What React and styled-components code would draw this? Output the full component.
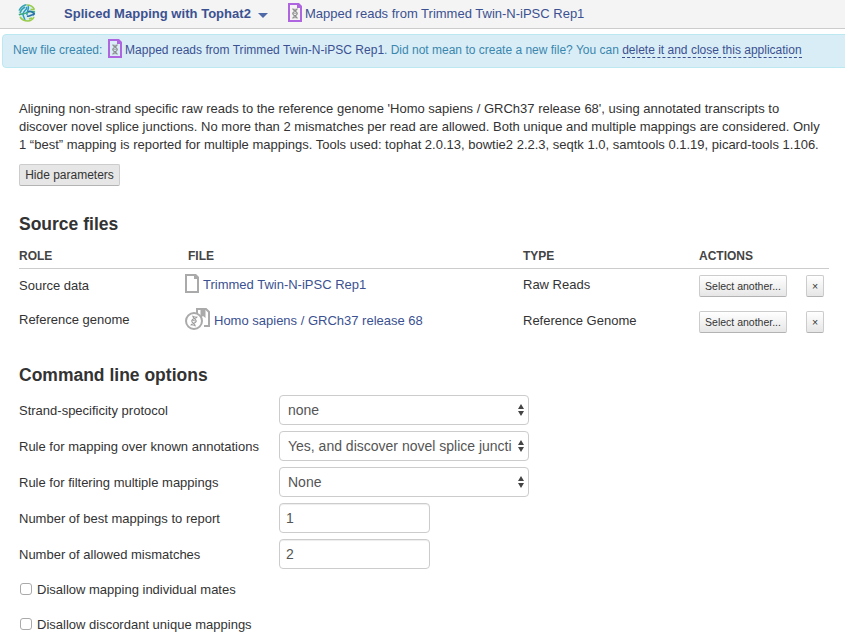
import React from 'react';
import styled, { createGlobalStyle } from 'styled-components';

const GlobalStyle = createGlobalStyle`
  *, *::before, *::after { box-sizing: border-box; }
  body {
    margin: 0;
    background: #fff;
    color: #333;
    font: 13px/18px "Liberation Sans", Helvetica, Arial, sans-serif;
    overflow: hidden;
  }
  button, input, select { font-family: inherit; }
`;

const Page = styled.div`
  width: 845px;
  height: 644px;
  overflow: hidden;
`;

const Header = styled.header`
  display: flex;
  align-items: flex-start;
  height: 29px;
  padding: 3px 18px 0;
  background: #f4f4f4;
  border-bottom: 1px solid #ccc;
  color: #3b5191;
  white-space: nowrap;
`;

const LogoIcon = styled.svg`
  flex: none;
  width: 18px;
  height: 18px;
  margin: 1px 28px 0 0;
`;

const AppName = styled.strong`
  width: 188px;
  margin-top: 2px;
  letter-spacing: 0.03px;
`;

const Caret = styled.span`
  margin: 10px 20px 0 6px;
  border: 5px solid transparent;
  border-top-color: #4f68a8;
  border-bottom: 0;
`;

const FileName = styled.span`
  margin-top: 2px;
`;

const PageIcon = styled.svg`
  flex: none;
  width: 14px;
  height: 19px;
  margin-right: ${(p) => p.$gap || 3}px;
`;

const GenomeIconSvg = styled.svg`
  flex: none;
  width: 25px;
  height: 22px;
  margin-right: 4px;
`;

const Notice = styled.div`
  display: flex;
  align-items: flex-start;
  width: 850px;
  height: 34px;
  margin: 5px 0 0 2px;
  padding: 4px 11px 0 10px;
  background: #d9edf7;
  border: 1px solid #bce8f1;
  border-radius: 4px;
  color: #3a87ad;
  font-size: 12px;
  white-space: pre;
`;

const NoticeText = styled.span`
  margin-top: 2px;
`;

const NoticeLead = styled(NoticeText)`
  width: 95px;
`;

const NoticeName = styled(NoticeText)`
  width: 259px;
  color: #3b5191;
  letter-spacing: 0.03px;
`;

const NoticeLink = styled.a`
  height: 17px;
  margin-top: 2px;
  line-height: 18px;
  color: #3b5191;
  border-bottom: 1px dashed #3b5191;
`;

const Content = styled.main`
  padding: 32px 16px 0 19px;
`;

const Description = styled.p`
  margin: 0;
  white-space: nowrap;
`;

const Line = styled.span`
  display: block;
`;

const ToggleButton = styled.button`
  display: block;
  width: 101px;
  height: 22px;
  margin-top: 10px;
  padding: 0 0 1px;
  border: 1px solid #ccc;
  border-bottom-color: #b3b3b3;
  border-radius: 2px;
  background: #e6e6e6;
  color: #333;
  font-size: 12px;
  line-height: 18px;
  white-space: nowrap;
`;

const SectionTitle = styled.h2`
  margin: ${(p) => p.$top}px 0 0;
  font-size: 17.5px;
  line-height: 24px;
`;

const TableRow = styled.div`
  display: grid;
  grid-template-columns: 166px 338px 176px 107px 1fr;
  height: 36px;
`;

const TableHead = styled(TableRow)`
  grid-template-columns: 169px 335px 176px 1fr;
  height: 33px;
  padding-top: 11px;
  border-bottom: 1px solid #ccc;
  font-weight: bold;
  font-size: 12px;
  color: #444;
`;

const Cell = styled.div`
  padding-top: ${(p) => p.$top}px;
  white-space: nowrap;
`;

const FileCell = styled.div`
  display: flex;
  align-items: flex-start;
  padding-top: ${(p) => p.$top}px;
  white-space: nowrap;
`;

const FileLink = styled.a`
  color: #3b5191;
  margin-top: ${(p) => p.$top}px;
`;

const SmallButton = styled.button`
  width: ${(p) => p.$width}px;
  height: 22px;
  margin-top: 6px;
  padding: 0;
  border: 1px solid #ccc;
  border-bottom-color: #b3b3b3;
  border-radius: 2px;
  background: linear-gradient(#fff, #e6e6e6);
  color: #333;
  font-size: 10.5px;
  line-height: 20px;
  white-space: nowrap;
`;

const Options = styled.div`
  display: grid;
  grid-template-columns: 260px 1fr;
  grid-auto-rows: 30px;
  row-gap: 6px;
  align-items: center;
  margin-top: 8px;
`;

const OptionLabel = styled.span`
  padding-top: 2px;
`;

const SelectBox = styled.div`
  display: flex;
  align-items: center;
  width: 250px;
  height: 30px;
  padding: 0 3px 0 8px;
  border: 1px solid #ccc;
  border-radius: 4px;
  color: #555;
  font-size: 14px;
`;

const SelectValue = styled.span`
  flex: 1;
  white-space: nowrap;
`;

const Arrows = styled.svg`
  flex: none;
  width: 8px;
  height: 14px;
`;

const NumberInput = styled.input`
  width: 151px;
  height: 30px;
  padding: 0 6px;
  border: 1px solid #ccc;
  border-radius: 4px;
  box-shadow: inset 0 1px 1px rgba(0, 0, 0, 0.075);
  color: #555;
  font-size: 14px;
  outline: 0;
`;

const CheckLabel = styled.label`
  display: flex;
  align-items: center;
  height: 20px;
  margin-top: ${(p) => p.$top}px;
`;

const Checkbox = styled.input`
  appearance: none;
  width: 12px;
  height: 12px;
  margin: 0 5px 2px 1px;
  border: 1px solid #aaa;
  border-radius: 3px;
  background: #fff;
`;

function Logo() {
  return (
    <LogoIcon viewBox="0 0 18 18" fill="none" strokeWidth="1.5">
      <circle cx="9" cy="9" r="8.6" fill="#d9eee9" />
      <path d="M1 6.5C3 3 5 1 8.5.8M2 9c1-3 3-5 5-6" stroke="#35a3b4" />
      <path d="M9 1c3 0 6 1.500 7.500 4.500M12.500 5.500h4" stroke="#9acb4a" />
      <path d="M8 3c2.500 2-3 4-3 7s2 4 2 7M10 2c2 3-2 6-1 9" stroke="#269ac9" />
      <path d="M1 11c2-2 4 0 7-2s5-2 9-1" stroke="#39a878" />
      <path d="M10 8c3-3 5 2 7 2M9 12c3 1 4-2 7-1" stroke="#276fae" />
      <path d="M2 13c2 3 5 4 8 4s5-2 6-4M11 15l3-1" stroke="#9acb4a" />
    </LogoIcon>
  );
}

function Helix({ x = 0, y = 0, color = '#888' }) {
  return (
    <g transform={`translate(${x} ${y})`} stroke={color} fill="none">
      <path d="M.7 0C.7 2.500 5.300 2.500 5.300 5S.7 7.500.7 10M5.300 0C5.300 2.500.7 2.500.7 5s4.600 2.500 4.600 5" strokeWidth="1.100" />
      <path d="M1 .8h4M1.200 4.700h3.600M1 9.200h4" strokeWidth=".8" />
    </g>
  );
}

function FileIcon({ color, helix, gap }) {
  return (
    <PageIcon $gap={gap} viewBox="0 0 14 19">
      <path d="M1 1h8.500L13 4.500V18H1z" fill="none" stroke={color} strokeWidth="2" />
      <path d="M9 0h2l3 3v2H9z" fill={color} />
      {helix && <Helix x={4} y={5.5} />}
    </PageIcon>
  );
}

function GenomeIcon() {
  return (
    <GenomeIconSvg viewBox="0 0 25 22" fill="none">
      <path d="M12 1h9l3 3v14h-5M12 0v5" stroke="#aaa" strokeWidth="2" />
      <path d="M15.500 1h5v9l-2.500-2-2.500 2z" fill="#aaa" />
      <circle cx="9" cy="13" r="8" fill="#fff" stroke="#aaa" strokeWidth="2" />
      <g transform="rotate(12 9 13)"><Helix x={6} y={8} color="#999" /></g>
    </GenomeIconSvg>
  );
}

function Select({ children }) {
  return (
    <SelectBox>
      <SelectValue>{children}</SelectValue>
      <Arrows viewBox="0 0 8 14"><path d="M1 6l3-5 3 5zM1 8h6l-3 5z" fill="#444" /></Arrows>
    </SelectBox>
  );
}

export default function App() {
  return (
    <Page>
      <GlobalStyle />
      <Header>
        <Logo />
        <AppName>Spliced Mapping with Tophat2</AppName>
        <Caret />
        <FileIcon color="#b065e0" helix />
        <FileName>Mapped reads from Trimmed Twin-N-iPSC Rep1</FileName>
      </Header>
      <Notice>
        <NoticeLead>New file created:</NoticeLead>
        <FileIcon color="#b065e0" helix />
        <NoticeName>Mapped reads from Trimmed Twin-N-iPSC Rep1</NoticeName>
        <NoticeText>. Did not mean to create a new file? You can </NoticeText>
        <NoticeLink>delete it and close this application</NoticeLink>
      </Notice>
      <Content>
        <Description>
          <Line>Aligning non-strand specific raw reads to the reference genome 'Homo sapiens / GRCh37 release 68', using annotated transcripts to</Line>
          <Line>discover novel splice junctions. No more than 2 mismatches per read are allowed. Both unique and multiple mappings are considered. Only</Line>
          <Line>1 “best” mapping is reported for multiple mappings. Tools used: tophat 2.0.13, bowtie2 2.2.3, seqtk 1.0, samtools 0.1.19, picard-tools 1.106.</Line>
        </Description>
        <ToggleButton>Hide parameters</ToggleButton>
        <SectionTitle $top={26}>Source files</SectionTitle>
        <TableHead>
          <span>ROLE</span><span>FILE</span><span>TYPE</span><span>ACTIONS</span>
        </TableHead>
        <TableRow>
          <Cell $top={8}>Source data</Cell>
          <FileCell $top={5}><FileIcon color="#aaa" gap={4} /><FileLink $top={2}>Trimmed Twin-N-iPSC Rep1</FileLink></FileCell>
          <Cell $top={7}>Raw Reads</Cell>
          <SmallButton $width={88}>Select another...</SmallButton>
          <SmallButton $width={18}>×</SmallButton>
        </TableRow>
        <TableRow>
          <Cell $top={6}>Reference genome</Cell>
          <FileCell $top={3}><GenomeIcon /><FileLink $top={4}>Homo sapiens / GRCh37 release 68</FileLink></FileCell>
          <Cell $top={7}>Reference Genome</Cell>
          <SmallButton $width={88}>Select another...</SmallButton>
          <SmallButton $width={18}>×</SmallButton>
        </TableRow>
        <SectionTitle $top={22}>Command line options</SectionTitle>
        <Options>
          <OptionLabel>Strand-specificity protocol</OptionLabel>
          <Select>none</Select>
          <OptionLabel>Rule for mapping over known annotations</OptionLabel>
          <Select>Yes, and discover novel splice juncti</Select>
          <OptionLabel>Rule for filtering multiple mappings</OptionLabel>
          <Select>None</Select>
          <OptionLabel>Number of best mappings to report</OptionLabel>
          <NumberInput defaultValue="1" />
          <OptionLabel>Number of allowed mismatches</OptionLabel>
          <NumberInput defaultValue="2" />
        </Options>
        <CheckLabel $top={11}><Checkbox type="checkbox" />Disallow mapping individual mates</CheckLabel>
        <CheckLabel $top={15}><Checkbox type="checkbox" />Disallow discordant unique mappings</CheckLabel>
      </Content>
    </Page>
  );
}
